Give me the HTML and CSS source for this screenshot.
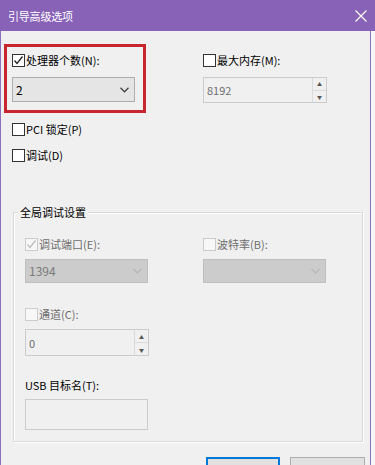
FILE: index.html
```html
<!DOCTYPE html>
<html lang="zh-CN">
<head>
	<meta charset="utf-8" />
	<title>引导高级选项</title>
	<link rel="stylesheet" href="styles.css">
</head>
<body>
<div class="titlebar">
	<span class="title">引导高级选项</span>
	<svg class="close" width="12" height="12" viewBox="0 0 12 12"><path d="M0.5 0.5 L11.5 11.5 M11.5 0.5 L0.5 11.5" stroke="#fff" stroke-width="1.2" fill="none"/></svg>
</div>
<div class="window">
	<div class="top">
		<div class="field highlight">
			<label class="check-row"><span class="box"><svg width="11" height="11" viewBox="0 0 11 11"><path d="M1.5 5.5 L4 8.5 L9.5 1.5" stroke="#222" stroke-width="1.3" fill="none"/></svg></span>处理器个数(N):</label>
			<div class="combo"><span>2</span><svg width="9" height="6" viewBox="0 0 9 6"><path d="M0.5 0.8 L4.5 4.8 L8.5 0.8" stroke="#444" stroke-width="1.3" fill="none"/></svg></div>
		</div>
		<div class="field side">
			<label class="check-row"><span class="box"></span>最大内存(M):</label>
			<div class="spin off"><span>8192</span><div class="arrows"><i>&#9650;</i><i>&#9660;</i></div></div>
		</div>
	</div>
	<label class="check-row solo first"><span class="box"></span>PCI 锁定(P)</label>
	<label class="check-row solo"><span class="box"></span>调试(D)</label>

	<div class="group">
		<span class="legend">全局调试设置</span>
		<div class="grid">
			<div class="cell">
				<label class="check-row dim"><span class="box"><svg width="11" height="11" viewBox="0 0 11 11"><path d="M1.5 5.5 L4 8.5 L9.5 1.5" stroke="#bcbcbc" stroke-width="1.3" fill="none"/></svg></span>调试端口(E):</label>
				<div class="combo off"><span>1394</span><svg width="9" height="6" viewBox="0 0 9 6"><path d="M0.5 0.8 L4.5 4.8 L8.5 0.8" stroke="#b4b4b4" stroke-width="1.2" fill="none"/></svg></div>
			</div>
			<div class="cell">
				<label class="check-row dim"><span class="box"></span>波特率(B):</label>
				<div class="combo off"><span></span><svg width="9" height="6" viewBox="0 0 9 6"><path d="M0.5 0.8 L4.5 4.8 L8.5 0.8" stroke="#b4b4b4" stroke-width="1.2" fill="none"/></svg></div>
			</div>
			<div class="cell">
				<label class="check-row dim"><span class="box"></span>通道(C):</label>
				<div class="spin off tall"><span>0</span><div class="arrows"><i>&#9650;</i><i>&#9660;</i></div></div>
			</div>
			<div class="cell"></div>
			<div class="cell">
				<label class="plain">USB 目标名(T):</label>
				<div class="textbox"></div>
			</div>
		</div>
	</div>

	<div class="buttons">
		<button class="btn default">确定</button>
		<button class="btn">取消</button>
	</div>
</div>
</body>
</html>
```

FILE: styles.css
```css
html {
	background: #f7f7f7;
}
body {
	margin: 0;
	padding: 0;
	width: 375px;
	height: 465px;
	overflow: hidden;
	font: 11px/16px "Noto Sans CJK SC", "Noto Sans", sans-serif;
	color: #000;
}
.titlebar {
	height: 31px;
	background: #8762b6;
	display: flex;
	align-items: center;
	justify-content: space-between;
	padding: 0 8px 0 8px;
	box-sizing: border-box;
}
.titlebar .title {
	color: #fff;
	font-size: 11px;
	letter-spacing: -0.2px;
}
.window {
	width: 371px;
	height: 434px;
	box-sizing: border-box;
	background: #f0f0f0;
	border-left: 1px solid #8a70bd;
	border-right: 1px solid #8a70bd;
	padding: 13px 0 0 3px;
}
.top {
	display: flex;
	gap: 57px;
}
.field.highlight {
	width: 142px;
	height: 69px;
	box-sizing: border-box;
	border: 3px solid #c8262f;
	padding: 5px 0 0 5px;
}
.field.side {
	padding-top: 8px;
}
.check-row {
	display: flex;
	align-items: center;
	height: 16px;
	gap: 1px;
}
.box {
	width: 11px;
	height: 11px;
	border: 1px solid #333;
	background: #fff;
	display: inline-flex;
	align-items: center;
	justify-content: center;
	flex: none;
}
.dim {
	color: #6d6d6d;
}
.dim .box {
	border-color: #cbcbcb;
	background: #f7f7f7;
}
.combo {
	margin-top: 9px;
	width: 123px;
	height: 25px;
	box-sizing: border-box;
	border: 1px solid #adadad;
	background: #e5e5e5;
	display: flex;
	align-items: center;
	justify-content: space-between;
	padding: 0 5px 0 3px;
	font-size: 12px;
}
.combo.off {
	margin-top: 7px;
	height: 24px;
	background: #cccccc;
	border-color: #bfbfbf;
	color: #7a7a7a;
}
.spin {
	margin-top: 9px;
	width: 124px;
	height: 26px;
	box-sizing: border-box;
	border: 1px solid #cccccc;
	background: #f0f0f0;
	display: flex;
	align-items: center;
	justify-content: space-between;
	padding-left: 3px;
	font-size: 11px;
	color: #6d6d6d;
}
.spin.tall {
	margin-top: 7px;
	height: 27px;
}
.arrows {
	width: 13px;
	height: 100%;
	display: flex;
	flex-direction: column;
	border-left: 1px solid #dadada;
}
.arrows i {
	flex: 1;
	font-style: normal;
	font-size: 5px;
	line-height: 1;
	color: #555;
	display: flex;
	align-items: center;
	justify-content: center;
}
.arrows i + i {
	border-top: 1px solid #dadada;
}
.solo {
	margin-left: 8px;
}
.solo.first {
	margin-top: 8px;
}
.solo + .solo {
	margin-top: 10px;
}
.group {
	position: relative;
	margin: 49px 0 0 9px;
	width: 350px;
	height: 230px;
	box-sizing: border-box;
	border: 1px solid #d8d8d8;
	box-shadow: inset 1px 1px 0 #fff, 1px 1px 0 #fff;
	padding: 23px 0 0 11px;
}
.legend {
	position: absolute;
	top: -9px;
	left: 4px;
	padding: 0 2px;
	background: #f0f0f0;
}
.grid {
	display: grid;
	grid-template-columns: 123px 124px;
	column-gap: 55px;
	row-gap: 23px;
}
.plain {
	display: block;
	height: 16px;
	margin-top: -2px;
}
.textbox {
	margin-top: 6px;
	width: 123px;
	height: 31px;
	box-sizing: border-box;
	border: 1px solid #cccccc;
	background: #f0f0f0;
}
.buttons {
	display: flex;
	justify-content: flex-end;
	gap: 10px;
	margin-top: 15px;
	padding-right: 5px;
}
.btn {
	width: 73px;
	height: 23px;
	border: 1px solid #adadad;
	background: #e1e1e1;
	font: 11px/16px "Noto Sans CJK SC", sans-serif;
	padding: 12px 0 0 0;
	display: flex;
	align-items: flex-start;
	justify-content: center;
	overflow: visible;
	box-sizing: content-box;
}
.btn.default {
	width: 70px;
	border: 2px solid #0078d7;
}
```
